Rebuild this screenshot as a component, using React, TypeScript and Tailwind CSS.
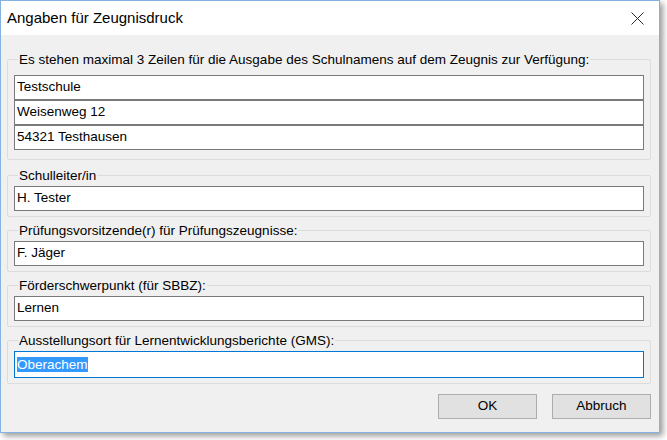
import React from "react";

const uiFont = "font-['Liberation_Sans',Arial,sans-serif]";

const TextBox: React.FC<{ value: string; className?: string }> = ({
  value,
  className = "",
}) => (
  <div
    className={`h-[25px] bg-white border border-[#7a7a7a] flex items-center pl-[2px] text-[13.5px] text-black ${className}`}
  >
    {value}
  </div>
);

const Group: React.FC<{
  label: string;
  className?: string;
  children: React.ReactNode;
}> = ({ label, className = "", children }) => (
  <fieldset
    className={`border border-[#dcdcdc] rounded-[2px] px-[6px] pb-[5px] ${className}`}
  >
    <legend className="ml-[4px] px-[1px] leading-[15px] text-[13.5px] text-black">
      {label}
    </legend>
    {children}
  </fieldset>
);

export default function App() {
  return (
    <div className={`w-[667px] h-[440px] bg-white ${uiFont}`}>
      <div className="w-[660px] h-[433px] flex flex-col bg-[#f0f0f0] border border-[#84b3e2] shadow-[3px_3px_6px_rgba(0,0,0,0.4)]">
        {/* title bar */}
        <div className="h-[34px] bg-white flex items-center justify-between pl-[6px] pr-[15px]">
          <span className="text-[15px] text-black">
            Angaben für Zeugnisdruck
          </span>
          <svg width="13" height="13" viewBox="0 0 13 13">
            <path d="M0.5 0.5 L12.5 12.5 M12.5 0.5 L0.5 12.5" stroke="#2b2b2b" strokeWidth="1" />
          </svg>
        </div>

        <div className="flex-1 flex flex-col pt-[17px] pl-[6px] pr-[8px] pb-[13px]">
          <Group label="Es stehen maximal 3 Zeilen für die Ausgabe des Schulnamens auf dem Zeugnis zur Verfügung:" className="pb-[9px]">
            <div className="mt-[8px] flex flex-col">
              <TextBox value="Testschule" className="h-[24px]" />
              <TextBox value="Weisenweg 12" className="h-[24px]" />
              <TextBox value="54321 Testhausen" />
            </div>
          </Group>

          <Group label="Schulleiter/in" className="mt-[8px]">
            <TextBox value="H. Tester" className="mt-[3px]" />
          </Group>

          <Group label="Prüfungsvorsitzende(r) für Prüfungszeugnisse:" className="mt-[6px]">
            <TextBox value="F. Jäger" className="mt-[3px]" />
          </Group>

          <Group label="Förderschwerpunkt (für SBBZ):" className="mt-[6px]">
            <TextBox value="Lernen" className="mt-[3px]" />
          </Group>

          <Group label="Ausstellungsort für Lernentwicklungsberichte (GMS):" className="mt-[6px]">
            <div className="mt-[3px] h-[27px] bg-white border border-[#0078d7] flex items-center pl-[2px] text-[13.5px]">
              <span className="bg-[#3399ff] text-white leading-[15px]">Oberachem</span>
            </div>
          </Group>

          <div className="mt-auto flex justify-end gap-[15px]">
            <button className="w-[99px] h-[25px] bg-[#e1e1e1] border border-[#adadad] text-[13.5px] text-black">
              OK
            </button>
            <button className="w-[99px] h-[25px] bg-[#e1e1e1] border border-[#adadad] text-[13.5px] text-black">
              Abbruch
            </button>
          </div>
        </div>
      </div>
    </div>
  );
}
